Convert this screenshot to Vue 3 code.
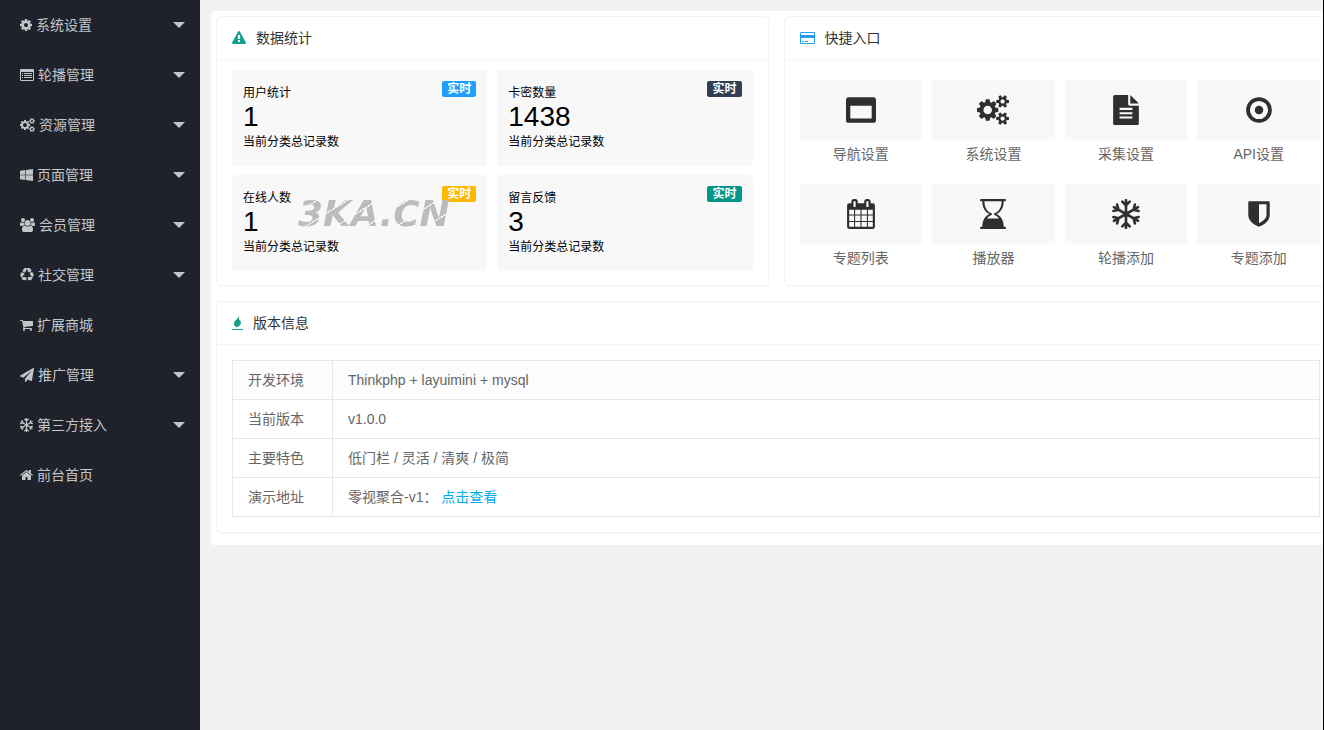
<script setup>
const gearPath = 'M1152 896q0-106-75-181t-181-75-181 75-75 181 75 181 181 75 181-75 75-181zm512-109v222q0 12-8 23t-20 13l-185 28q-19 54-39 91 35 50 107 138 10 12 10 25t-9 23q-27 37-99 108t-94 71q-12 0-26-9l-138-108q-44 23-91 38-16 136-29 186-7 28-36 28h-222q-14 0-24.5-8.5t-11.5-21.5l-28-184q-49-16-90-37l-141 107q-10 9-25 9-14 0-25-11-126-114-165-168-7-10-7-23 0-12 8-23 15-21 51-66.5t54-70.5q-27-50-41-99l-183-27q-13-2-21-12.5t-8-23.5v-222q0-12 8-23t19-13l186-28q14-46 39-92-40-57-107-138-10-12-10-24 0-10 9-23 26-36 98.5-107.5t94.5-71.5q13 0 26 10l138 107q44-23 91-38 16-136 29-186 7-28 36-28h222q14 0 24.5 8.5t11.5 21.5l28 184q49 16 90 37l142-107q9-9 24-9 13 0 25 10 129 119 165 170 7 8 7 22 0 12-8 23-15 21-51 66.5t-54 70.5q26 50 41 98l183 28q13 2 21 12.5t8 23.5z'

const smallGear = 'v140q0 16-149 31-12 27-30 52 51 113 51 138 0 4-4 7-122 71-124 71-8 0-46-47t-52-68q-20 2-30 2t-30-2q-14 21-52 68t-46 47q-2 0-124-71-4-3-4-7 0-25 51-138-18-25-30-52-149-15-149-31v-140q0-16 149-31 13-29 30-52-51-113-51-138 0-4 4-7 4-2 35-20t59-34 30-16q8 0 46 46.5t52 67.5q20-2 30-2t30 2q51-71 92-112l6-2q4 0 124 70 4 3 4 7 0 25-51 138 17 23 30 52 149 15 149 31z'

const gearsPath = 'M832 896q0-106-75-181t-181-75-181 75-75 181 75 181 181 75 181-75 75-181zm768 512q0-52-38-90t-90-38-90 38-38 90q0 53 37.5 90.5t90.5 37.5 90.5-37.5 37.5-90.5zm0-1024q0-52-38-90t-90-38-90 38-38 90q0 53 37.5 90.5t90.5 37.5 90.5-37.5 37.5-90.5zm-384 421v185q0 10-7 19.5t-16 10.5l-155 24q-11 35-32 76 34 48 90 115 7 11 7 20 0 12-7 19-23 30-82.5 89.5t-78.5 59.5q-11 0-21-7l-115-90q-37 19-77 31-11 108-23 155-7 24-30 24h-186q-11 0-20-7.5t-10-17.5l-23-153q-34-10-75-31l-118 89q-7 7-20 7-11 0-21-8-144-133-144-160 0-9 7-19 10-14 41-53t47-61q-23-44-35-82l-152-24q-10-1-17-9.5t-7-19.5v-185q0-10 7-19.5t16-10.5l155-24q11-35 32-76-34-48-90-115-7-11-7-20 0-12 7-20 22-30 82-89t79-59q11 0 21 7l115 90q34-18 77-32 11-108 23-154 7-24 30-24h186q11 0 20 7.5t10 17.5l23 153q34 10 75 31l118-89q8-7 20-7 11 0 21 8 144 133 144 160 0 8-7 19-12 16-42 54t-45 60q23 48 34 82l152 23q10 2 17 10.5t7 19.5zm640 533' + smallGear + 'm0-1024' + smallGear

const arms = [0, 60, 120, 180, 240, 300]
const snowflakePath = arms.map((deg) => {
  const a = (deg * Math.PI) / 180
  const p = (x, y) => `${Math.round(832 + x * Math.cos(a) - y * Math.sin(a))} ${Math.round(896 + x * Math.sin(a) + y * Math.cos(a))}`
  return `M${p(0, 0)}L${p(0, -830)}M${p(-220, -740)}L${p(0, -520)}L${p(220, -740)}`
}).join('')

const icons = {
  gear: { box: '128 0 1536 1792', w: 12, d: gearPath },
  list: { box: '0 0 1792 1792', w: 14, d: 'M160 128H1632Q1792 128 1792 288V1504Q1792 1664 1632 1664H160Q0 1664 0 1504V288Q0 128 160 128ZM128 512V1504Q128 1536 160 1536H1632Q1664 1536 1664 1504V512ZM256 640H384V768H256ZM512 640H1536V768H512ZM256 896H384V1024H256ZM512 896H1536V1024H512ZM256 1152H384V1280H256ZM512 1152H1536V1280H512Z' },
  gears: { box: '-64 0 1920 1792', w: 15, d: gearsPath },
  windows: { box: '0 0 1664 1792', w: 13, d: 'M0 362L682 268V856H0ZM757 258L1664 128V856H757ZM0 932H682V1522L0 1428ZM757 932H1664V1664L757 1536Z' },
  users: { box: '0 0 1920 1792', w: 15, d: 'M593 896q-162 5-265 128h-134q-82 0-138-40.5t-56-118.5q0-353 124-353 6 0 43.5 21t97.5 42.5 119 21.5q67 0 133-23-5 37-5 66 0 139 81 256zm1071 637q0 120-73 189.5t-194 69.5h-874q-121 0-194-69.5t-73-189.5q0-53 3.5-103.5t14-109 26.5-108.5 43-97.5 62-81 85.5-53.5 111.5-20q10 0 43 21.5t73 48 107 48 135 21.5 135-21.5 107-48 73-48 43-21.5q61 0 111.5 20t85.5 53.5 62 81 43 97.5 26.5 108.5 14 109 3.5 103.5zm-1024-1277q0 106-75 181t-181 75-181-75-75-181 75-181 181-75 181 75 75 181zm704 384q0 159-112.5 271.5t-271.5 112.5-271.5-112.5-112.5-271.5 112.5-271.5 271.5-112.5 271.5 112.5 112.5 271.5zm576 225q0 78-56 118.5t-138 40.5h-134q-103-123-265-128 81-117 81-256 0-29-5-66 66 23 133 23 59 0 119-21.5t97.5-42.5 43.5-21q124 0 124 353zm-128-609q0 106-75 181t-181 75-181-75-75-181 75-181 181-75 181 75 75 181z', solid: true },
  recycle: { box: '0 0 1792 1792', w: 14, d: 'M836 1169l-15 368-2 22-420-29q-36-3-67-31.5t-47-65.5q-11-27-14.5-55t4-65 12-55 21.5-64 19-53q78 12 509 28zm-387-586l180 379-147-92q-63 72-111.5 144.5t-72.5 125-39.5 94.5-18.5 63l-4 21-190-357q-17-26-18-56t6-47l8-18q35-63 114-188l-140-86zm1231 517l-188 359q-12 29-36.5 46.5t-43.5 20.5l-18 4q-71 7-219 12l8 164-230-367 211-362 7 173q170 16 283 5t170-33zm-785-924q-47 63-265 435l-317-187-19-12 225-356q20-31 60-45t80-10q24 2 48.5 12t42 21 41.5 33 36 34.5 36 39.5 32 35zm655 307l212 363q18 37 12.5 76t-27.5 74q-13 20-33 37t-38 28-48.5 22-47 16-51.5 14-46 12q-34-72-265-436l313-195zm-143-226l142-83-220 373-419-20 151-86q-34-89-75-166t-75.5-123.5-64.5-80-47-46.5l-17-13 405 1q31-3 58 10.5t39 28.5l11 15q39 61 112 190z' },
  cart: { box: '64 0 1664 1792', w: 13, d: 'M704 1536q0 52-38 90t-90 38-90-38-38-90 38-90 90-38 90 38 38 90zm896 0q0 52-38 90t-90 38-90-38-38-90 38-90 90-38 90 38 38 90zm128-1088v512q0 24-16.5 42.5t-40.5 21.5l-1044 122q13 60 13 70 0 16-24 64h920q26 0 45 19t19 45-19 45-45 19h-1024q-26 0-45-19t-19-45q0-11 8-31.5t16-36 21.5-40 15.5-29.5l-177-823h-204q-26 0-45-19t-19-45 19-45 45-19h256q16 0 28.5 6.5t19.5 15.5 13 24.5 8 26 5.5 29.5 4.5 26h1201q26 0 45 19t19 45z' },
  plane: { box: '0 0 1792 1792', w: 14, d: 'M1764 11q33 24 27 64l-256 1536q-5 29-32 45-14 8-31 8-11 0-24-5l-453-185-242 295q-18 23-49 23-13 0-22-4-19-7-30.5-23.5t-11.5-36.5v-349l864-1059-1069 925-395-162q-37-14-40-55-2-40 32-59l1664-960q15-9 32-9 20 0 36 11z' },
  snowflake: { box: '0 0 1664 1792', w: 13, d: snowflakePath, stroke: 156 },
  home: { box: '64 0 1664 1792', w: 13, d: 'M1472 992v480q0 26-19 45t-45 19h-384v-384h-256v384h-384q-26 0-45-19t-19-45v-480q0-1 .5-3t.5-3l575-474 575 474q1 2 1 6zm223-69l-62 74q-8 9-21 11h-3q-13 0-21-7l-692-577-692 577q-12 8-24 7-13-2-21-11l-62-74q-8-10-7-23.5t11-21.5l719-599q32-26 76-26t76 26l244 204v-195q0-14 9-23t23-9h192q14 0 23 9t9 23v408l219 182q10 8 11 21.5t-7 23.5z' },
  warning: { box: '0 0 1792 1792', w: 14, d: 'M1024 1375v-190q0-14-9.5-23.5t-22.5-9.5h-192q-13 0-22.5 9.5t-9.5 23.5v190q0 14 9.5 23.5t22.5 9.5h192q13 0 22.5-9.5t9.5-23.5zm-2-374l18-459q0-12-10-19-13-11-24-11h-220q-11 0-24 11-10 7-10 21l17 457q0 10 10 16.5t24 6.5h185q14 0 23.5-6.5t10.5-16.5zm-14-934l768 1408q35 63-2 126-17 29-46.5 46t-63.5 17h-1536q-34 0-63.5-17t-46.5-46q-37-63-2-126l768-1408q17-31 47-49t65-18 65 18 47 49z' },
  card: { box: '0 0 1920 1792', w: 15, d: 'M160 128H1760Q1920 128 1920 288V1504Q1920 1664 1760 1664H160Q0 1664 0 1504V288Q0 128 160 128ZM128 288V512H1792V288Q1792 256 1760 256H160Q128 256 128 288ZM128 896V1504Q128 1536 160 1536H1760Q1792 1536 1792 1504V896ZM256 1280H512V1408H256ZM640 1280H1024V1408H640Z' },
  fire: { box: '0 0 1408 1792', w: 11, solid: true, d: 'M0 1664H1408V1792H0ZM800 0C830 180 740 320 580 450C370 630 230 790 260 1020C280 1210 400 1350 600 1470C640 1420 720 1400 800 1350C1000 1230 1140 1090 1140 850C1150 680 1020 600 1030 440C970 500 930 520 890 560C930 370 920 170 800 0Z' },
  window: { box: '0 0 1792 1792', w: 30, d: 'M160 128H1632Q1792 128 1792 288V1504Q1792 1664 1632 1664H160Q0 1664 0 1504V288Q0 128 160 128ZM256 640V1408H1536V640Z' },
  file: { box: '0 0 1536 1792', w: 26, d: 'M96 0H896V544Q896 640 992 640H1536V1696Q1536 1792 1440 1792H96Q0 1792 0 1696V96Q0 0 96 0ZM1024 20Q1060 30 1096 70L1466 440Q1500 475 1516 512H1024ZM384 768V896H1152V768ZM384 1024V1152H1152V1024ZM384 1280V1408H1152V1280Z' },
  target: { box: '0 0 1536 1792', w: 26, d: 'M768 128A768 768 0 1 1 768 1664A768 768 0 1 1 768 128ZM768 352A544 544 0 1 0 768 1440A544 544 0 1 0 768 352ZM768 640A256 256 0 1 1 768 1152A256 256 0 1 1 768 640Z' },
  calendar: { box: '0 0 1664 1792', w: 28, d: 'M128 256H256V160Q256 0 416 0H480Q640 0 640 160V256H1024V160Q1024 0 1184 0H1248Q1408 0 1408 160V256H1536Q1664 256 1664 384V1664Q1664 1792 1536 1792H128Q0 1792 0 1664V384Q0 256 128 256ZM384 160V448Q384 480 416 480H480Q512 480 512 448V160Q512 128 480 128H416Q384 128 384 160ZM1152 160V448Q1152 480 1184 480H1248Q1280 480 1280 448V160Q1280 128 1248 128H1184Q1152 128 1152 160ZM128 640V928H416V640ZM480 640V928H800V640ZM864 640V928H1184V640ZM1248 640V928H1536V640ZM128 992V1312H416V992ZM480 992V1312H800V992ZM864 992V1312H1184V992ZM1248 992V1312H1536V992ZM128 1376V1664H416V1376ZM480 1376V1664H800V1376ZM864 1376V1664H1184V1376ZM1248 1376V1664H1536V1376Z' },
  hourglass: { box: '0 0 1536 1792', w: 26, d: 'M32 0H1504Q1536 0 1536 32V96Q1536 128 1504 128H1408C1408 500 1250 780 970 896C1250 1012 1408 1292 1408 1664H1504Q1536 1664 1536 1696V1760Q1536 1792 1504 1792H32Q0 1792 0 1760V1696Q0 1664 32 1664H128C128 1292 286 1012 566 896C286 780 128 500 128 128H32Q0 128 0 96V32Q0 0 32 0ZM256 128C256 480 410 760 700 850V942C580 985 490 1060 410 1170H1126C1046 1060 956 985 836 942V850C1126 760 1280 480 1280 128Z' },
  shield: { box: '0 0 1280 1792', w: 22, d: 'M64 128H1216Q1280 128 1280 192V960C1280 1280 1000 1530 640 1664C280 1530 0 1280 0 960V192Q0 128 64 128ZM640 320V1444C900 1320 1088 1150 1088 960V320Z' },
}

const menu = [
  { icon: 'gear', label: '系统设置', more: true },
  { icon: 'list', label: '轮播管理', more: true },
  { icon: 'gears', label: '资源管理', more: true },
  { icon: 'windows', label: '页面管理', more: true },
  { icon: 'users', label: '会员管理', more: true },
  { icon: 'recycle', label: '社交管理', more: true },
  { icon: 'cart', label: '扩展商城', more: false },
  { icon: 'plane', label: '推广管理', more: true },
  { icon: 'snowflake', label: '第三方接入', more: true },
  { icon: 'home', label: '前台首页', more: false },
]

const stats = [
  { label: '用户统计', value: '1', tone: 'blue' },
  { label: '卡密数量', value: '1438', tone: 'navy' },
  { label: '在线人数', value: '1', tone: 'amber' },
  { label: '留言反馈', value: '3', tone: 'green' },
]

const shortcuts = [
  { icon: 'window', label: '导航设置' },
  { icon: 'gears', label: '系统设置', w: 32 },
  { icon: 'file', label: '采集设置' },
  { icon: 'target', label: 'API设置' },
  { icon: 'calendar', label: '专题列表' },
  { icon: 'hourglass', label: '播放器' },
  { icon: 'snowflake', label: '轮播添加', w: 28 },
  { icon: 'shield', label: '专题添加' },
]
</script>

<template>
  <div class="app">
    <nav class="sidebar">
      <a v-for="item in menu" :key="item.label" class="menu-item" href="#">
        <svg :viewBox="icons[item.icon].box" :width="icons[item.icon].w" height="14" aria-hidden="true">
          <path
            :d="icons[item.icon].d"
            :class="icons[item.icon].stroke ? 'line' : icons[item.icon].solid ? 'solid' : 'shape'"
            :stroke-width="icons[item.icon].stroke"
          />
        </svg>
        <span>{{ item.label }}</span>
        <i v-if="item.more" class="caret"></i>
      </a>
    </nav>

    <main class="main">
      <div class="panel">
        <section class="card">
          <h2 class="card-title green-icon">
            <svg :viewBox="icons.warning.box" width="14" height="14" aria-hidden="true"><path class="shape" :d="icons.warning.d" /></svg>
            数据统计
          </h2>
          <div class="stats">
            <div v-for="s in stats" :key="s.label" class="stat">
              <span class="badge" :class="s.tone">实时</span>
              <div class="stat-label">{{ s.label }}</div>
              <div class="stat-value">{{ s.value }}</div>
              <div class="stat-label">当前分类总记录数</div>
              <span v-if="s.tone === 'amber'" class="watermark">3KA.CN</span>
            </div>
          </div>
        </section>

        <section class="card">
          <h2 class="card-title blue-icon">
            <svg :viewBox="icons.card.box" width="15" height="14" aria-hidden="true"><path class="shape" :d="icons.card.d" /></svg>
            快捷入口
          </h2>
          <div class="shortcuts">
            <a v-for="s in shortcuts" :key="s.label" class="shortcut" href="#">
              <span class="tile">
                <svg :viewBox="icons[s.icon].box" :width="s.w || icons[s.icon].w" height="30" aria-hidden="true">
                  <path
                    :d="icons[s.icon].d"
                    :class="icons[s.icon].stroke ? 'line' : 'shape'"
                    :stroke-width="icons[s.icon].stroke"
                  />
                </svg>
              </span>
              <span class="shortcut-label">{{ s.label }}</span>
            </a>
          </div>
        </section>

        <section class="card wide">
          <h2 class="card-title green-icon">
            <svg :viewBox="icons.fire.box" width="11" height="14" aria-hidden="true"><path class="solid" :d="icons.fire.d" /></svg>
            版本信息
          </h2>
          <div class="version">
            <table>
              <tbody>
                <tr><th scope="row">开发环境</th><td>Thinkphp + layuimini + mysql</td></tr>
                <tr><th scope="row">当前版本</th><td>v1.0.0</td></tr>
                <tr><th scope="row">主要特色</th><td>低门栏 / 灵活 / 清爽 / 极简</td></tr>
                <tr><th scope="row">演示地址</th><td>零视聚合-v1： <a class="link" href="#">点击查看</a></td></tr>
              </tbody>
            </table>
          </div>
        </section>
      </div>
    </main>
  </div>
</template>

<style>
body {
  margin: 0;
  background: #f1f1f1;
}
</style>

<style scoped>
.app {
  display: flex;
  box-sizing: border-box;
  min-height: 100vh;
  overflow: hidden;
  border-right: 1px solid #000;
  font-family: "Liberation Sans", "Noto Sans CJK SC", sans-serif;
  font-size: 14px;
  line-height: 20px;
  color: #666;
}

a {
  color: inherit;
  text-decoration: none;
}

svg {
  display: block;
  flex: none;
}

.shape {
  fill: currentColor;
  fill-rule: evenodd;
}

.solid {
  fill: currentColor;
}

.line {
  fill: none;
  stroke: currentColor;
  stroke-linecap: round;
  stroke-linejoin: round;
}

.sidebar {
  flex: none;
  width: 200px;
  background: #1f222a;
  color: #c4c5c8;
}

.menu-item {
  display: flex;
  align-items: center;
  gap: 4px;
  height: 50px;
  padding: 0 15px 0 20px;
}

.caret {
  margin-left: auto;
  border: 6px solid transparent;
  border-top-color: #c4c5c8;
  border-bottom-width: 0;
}

.main {
  flex: 1;
  min-width: 0;
}

/* The panel runs on past the right edge of the frame. */
.panel {
  display: grid;
  grid-template-columns: 1fr 1fr;
  gap: 15px;
  margin: 11px -18px 0 11px;
  padding: 5px 5px 12px;
  border-radius: 4px;
  background: #fff;
}

.card {
  border: 1px solid #f2f2f2;
  border-radius: 5px;
  box-shadow: 0 1px 1px rgba(0, 0, 0, 0.03);
}

.wide {
  grid-column: 1 / -1;
}

.card-title {
  display: flex;
  align-items: center;
  gap: 10px;
  height: 42px;
  margin: 0;
  padding: 0 15px;
  border-bottom: 1px solid #f4f4f4;
  font-size: 14px;
  font-weight: 400;
  color: #333;
}

.green-icon svg {
  color: #16a08c;
}

.blue-icon svg {
  color: #1e9fe8;
}

.stats {
  display: grid;
  grid-template-columns: 1fr 1fr;
  gap: 9px 10px;
  padding: 10px 15px 14px;
}

.stat {
  position: relative;
  box-sizing: border-box;
  height: 96px;
  padding: 14px 11px;
  border-radius: 2px;
  background: #f8f8f8;
  color: #000;
}

.stat-label {
  font-size: 12px;
  line-height: 18px;
}

.stat-value {
  margin-bottom: 2px;
  font-size: 28px;
  line-height: 29px;
}

.badge {
  position: absolute;
  top: 11px;
  right: 11px;
  padding: 0 5px;
  border-radius: 2px;
  font-size: 12px;
  font-weight: 700;
  line-height: 16px;
  color: #fff;
}

.blue { background: #1e9fff; }
.navy { background: #2f4056; }
.amber { background: #ffb800; }
.green { background: #009688; }

.watermark {
  position: absolute;
  top: 19px;
  left: 66px;
  font: italic 700 36px/40px "DejaVu Sans", sans-serif;
  color: transparent;
  background: repeating-linear-gradient(148deg, #bcbcbc 0 15px, #f8f8f8 15px 16px);
  background-clip: text;
}

.shortcuts {
  display: grid;
  grid-template-columns: repeat(4, 1fr);
  gap: 16px 10px;
  padding: 20px 15px 13px;
}

.tile {
  display: flex;
  align-items: center;
  justify-content: center;
  height: 60px;
  border-radius: 2px;
  background: #f8f8f8;
  color: #2f2f2f;
}

.shortcut-label {
  display: block;
  line-height: 28px;
  text-align: center;
}

.version {
  padding: 15px;
}

table {
  width: 100%;
  border-collapse: collapse;
}

tr:first-child {
  background: #fcfcfc;
}

th,
td {
  height: 38px;
  padding: 0 15px;
  border: 1px solid #e6e6e6;
  font-weight: 400;
  text-align: left;
}

th {
  box-sizing: border-box;
  width: 100px;
}

.link {
  color: #01aaed;
}
</style>
